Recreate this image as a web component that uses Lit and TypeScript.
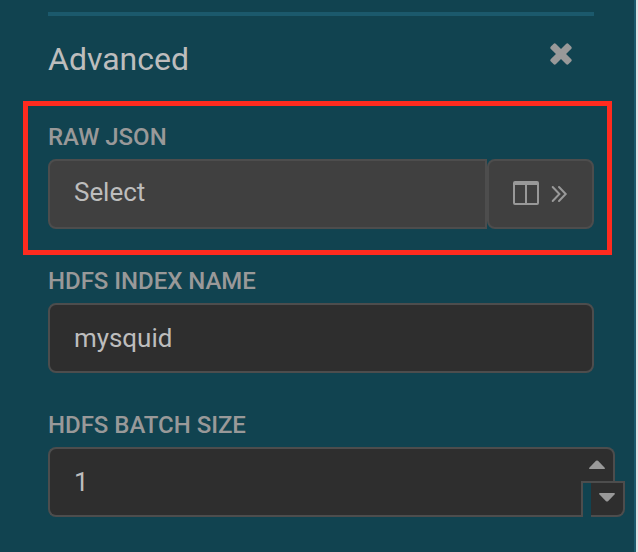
import { LitElement, html, css } from "lit";
import { customElement } from "lit/decorators.js";

@customElement("app-root")
export class AppRoot extends LitElement {
  static styles = css`
    :host {
      display: block;
      height: 552px;
      overflow: hidden;
      background: #e2e2e2;
      font-family: Roboto, "Liberation Sans", sans-serif;
    }
    * { box-sizing: border-box; }
    svg { display: block; flex: none; }
    .panel {
      width: 636px;
      height: 552px;
      padding: 12px 0 0 23px;
      background: #114350;
      border-right: 2px solid #1b596c;
      display: flex;
      flex-direction: column;
    }
    .head {
      margin-left: 25px;
      width: 546px;
      height: 89px;
      border-top: 4px solid #1b596c;
      display: flex;
      justify-content: space-between;
      padding: 24px 22px 0 0;
    }
    .title {
      margin: 0;
      font-size: 32px;
      font-weight: 400;
      line-height: 38px;
      color: #bdbdbd;
    }
    .close { margin-top: 3px; width: 22px; height: 22px; }
    .field { width: 546px; margin-left: 25px; }
    .field.marked {
      width: 589px;
      height: 154px;
      margin: 0 0 12px;
      border: 5px solid #ff2b1f;
      padding: 17px 13px 0 20px;
    }
    .field.index { margin-bottom: 38px; }
    .field.batch { width: 577px; }
    .label {
      height: 36px;
      line-height: 28px;
      font-size: 24px;
      font-weight: 500;
      letter-spacing: -0.03px;
      color: #999;
      white-space: nowrap;
    }
    .row { display: flex; height: 70px; }
    .box {
      border: 2px solid #4d4d4d;
      border-radius: 8px;
      background: #2e2e2e;
      height: 70px;
      padding-left: 24px;
      line-height: 66px;
      font-size: 26px;
      letter-spacing: -0.05px;
      color: #bdbdbd;
    }
    .select {
      width: 439px;
      background: #404040;
      border-radius: 8px 0 0 8px;
      line-height: 62px;
    }
    .open {
      width: 107px;
      padding: 0 0 0 24px;
      background: #404040;
      display: flex;
      align-items: center;
      gap: 12px;
    }
    .columns { margin-bottom: 2px; }
    .number {
      width: 533px;
      border-right: 0;
      border-radius: 8px 0 0 8px;
    }
    .spin { position: relative; width: 44px; flex: none; }
    .spin::before {
      content: "";
      position: absolute;
      left: 0;
      top: 34px;
      width: 2px;
      height: 36px;
      background: #4d4d4d;
    }
    .up, .down {
      position: absolute;
      width: 34px;
      height: 36px;
      background: #2e2e2e;
      border: 2px solid #4d4d4d;
      border-left: 0;
    }
    .up { left: 0; top: 0; border-radius: 0 8px 0 0; padding: 11px 0 0 8px; }
    .down { left: 10px; top: 34px; border-radius: 0 0 8px 0; padding: 10px 0 0 8px; }
  `;

  render() {
    return html`
      <div class="panel">
        <div class="head">
          <h2 class="title">Advanced</h2>
          <svg class="close" viewBox="-11 -11 22 22" fill="#999">
            <rect x="-12.5" y="-3.6" width="25" height="7.2" rx="1.8" transform="rotate(45)" />
            <rect x="-12.5" y="-3.6" width="25" height="7.2" rx="1.8" transform="rotate(-45)" />
          </svg>
        </div>
        <div class="field marked">
          <div class="label">RAW JSON</div>
          <div class="row">
            <div class="box select">Select</div>
            <div class="box open">
              <svg class="columns" width="26" height="24" viewBox="0 0 26 24">
                <path fill="#999" fill-rule="evenodd" d="M2 0H24Q26 0 26 2V22Q26 24 24 24H2Q0 24 0 22V2Q0 0 2 0ZM2 4V22H12V4ZM14 4V22H24V4Z" />
              </svg>
              <svg width="18" height="18" viewBox="0 0 18 18">
                <path d="M1.7 2 8.4 9 1.7 16M8 2 14.7 9 8 16" fill="none" stroke="#999" stroke-width="2" stroke-linecap="round" />
              </svg>
            </div>
          </div>
        </div>
        <div class="field index">
          <div class="label">HDFS INDEX NAME</div>
          <div class="box">mysquid</div>
        </div>
        <div class="field batch">
          <div class="label">HDFS BATCH SIZE</div>
          <div class="row">
            <div class="box number">1</div>
            <div class="spin">
              <div class="up">
                <svg width="16" height="9" viewBox="0 0 16 9"><path fill="#999" d="M1 9Q-.5 9 .5 7.6L7 .8Q8 0 9 .8L15.5 7.6Q16.5 9 15 9Z" /></svg>
              </div>
              <div class="down">
                <svg width="16" height="9" viewBox="0 0 16 9"><path fill="#999" d="M1 0Q-.5 0 .5 1.4L7 8.2Q8 9 9 8.2L15.5 1.4Q16.5 0 15 0Z" /></svg>
              </div>
            </div>
          </div>
        </div>
      </div>
    `;
  }
}
